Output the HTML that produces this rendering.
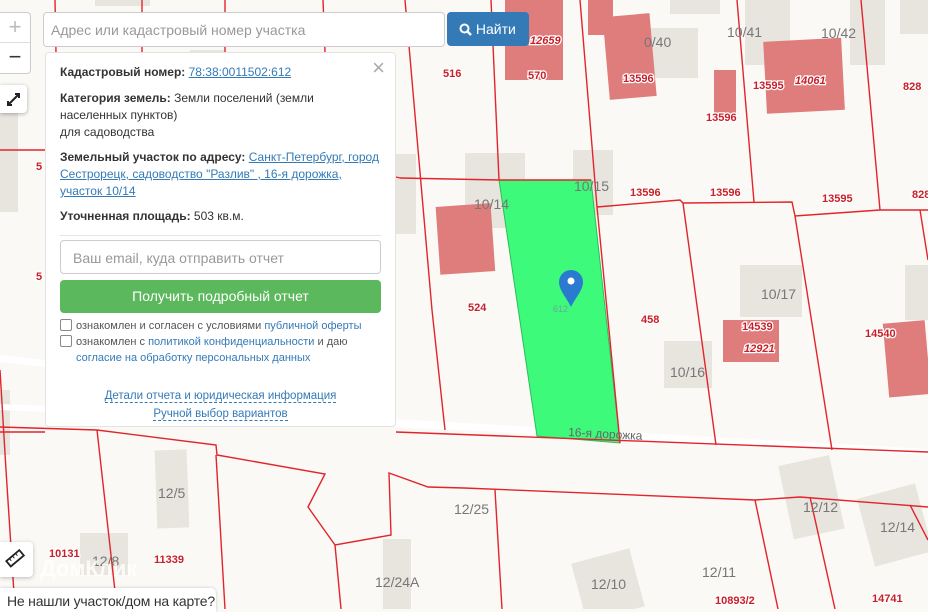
<!DOCTYPE html>
<html><head><meta charset="utf-8"><style>
*{box-sizing:border-box}
body{margin:0;width:928px;height:609px;overflow:hidden;background:#faf9f5;font-family:"Liberation Sans",Arial,sans-serif;position:relative}
svg.map{position:absolute;left:0;top:0}
.ab{position:absolute}
.panel{left:45px;top:52px;width:351px;height:375px;background:#fff;border:1px solid #e3e3e3;border-radius:4px;font-size:12px;color:#333;padding:0 14px}
.panel p{margin:0;position:absolute;left:14px;right:14px;line-height:17px}
.panel b{color:#333}
a{color:#337ab7}
.lk{color:#337ab7;text-decoration:none}
</style></head><body>
<svg class="map" width="928" height="609" viewBox="0 0 928 609">
<g fill="#e8e5df">
<rect x="95" y="0" width="55" height="6"/><rect x="190" y="50" width="35" height="5"/>
<rect x="0" y="100" width="18" height="112"/>
<rect x="396" y="154" width="20" height="80"/>
<rect x="465" y="153" width="60" height="75"/><rect x="573" y="150" width="40" height="65"/>
<rect x="630" y="28" width="68" height="50"/><rect x="670" y="0" width="50" height="14"/>
<rect x="745" y="0" width="45" height="65"/><rect x="850" y="0" width="35" height="65"/>
<rect x="900" y="0" width="28" height="34"/>
<rect x="740" y="265" width="62" height="52"/><rect x="905" y="265" width="23" height="55"/>
<rect x="664" y="341" width="48" height="47"/><rect x="0" y="390" width="10" height="65"/>
<rect x="156" y="450" width="32" height="78" transform="rotate(-2 170 490)"/>
<rect x="80" y="533" width="48" height="42"/><rect x="383" y="539" width="28" height="70"/>
<rect x="785" y="460" width="52" height="75" transform="rotate(-12 810 495)"/>
<rect x="865" y="490" width="60" height="70" transform="rotate(-15 895 525)"/>
<rect x="578" y="555" width="60" height="60" transform="rotate(-15 608 585)"/>
</g>
<g fill="#df7d7d">
<rect x="505" y="0" width="58" height="80"/><rect x="588" y="0" width="25" height="35"/>
<rect x="606" y="15" width="47" height="83" transform="rotate(-5 630 55)"/>
<rect x="714" y="70" width="22" height="48"/>
<rect x="765" y="40" width="78" height="72" transform="rotate(-3 800 75)"/>
<rect x="438" y="205" width="55" height="68" transform="rotate(-4 465 240)"/>
<rect x="723" y="320" width="56" height="42"/>
<rect x="886" y="322" width="42" height="74" transform="rotate(-5 905 360)"/>
</g>
<path d="M411 420 L928 449 L928 455 L460 430 L0 410 L0 404Z" fill="#fff"/>
<path d="M0 355 L45 360 L45 367 L0 362Z" fill="#fff"/>
<polygon points="499,180 591,180 620,443 537,436" fill="#3dfa7a" stroke="#2dbd5a" stroke-width="1"/>
<g fill="none" stroke="#e2242c" stroke-width="1.4">
<path d="M55 0 L58 160"/><path d="M142 0 L142 52"/><path d="M225 0 L225 52"/><path d="M323 0 L325 52"/>
<path d="M405 0 L432 310 L445 430"/><path d="M491 0 L499 180"/><path d="M580 0 L597 207 L620 443"/>
<path d="M737 0 L754 202"/><path d="M861 0 L880 210"/>
<path d="M400 178 L499 180 L591 180"/><path d="M597 207 L680 200 L683 203 L792 202 L795 216 L880 210 L928 210"/>
<path d="M683 203 L716 445"/><path d="M795 216 L832 450"/><path d="M920 210 L928 260"/>
<path d="M0 150 L45 150"/><path d="M396 177 L400 178"/>
<path d="M0 427 L97 430 L216 445 L217 455 L325 474 L308 507 L335 545 L391 535 L389 473 L428 487 L464 488 L755 500 L800 497 L928 507"/>
<path d="M0 432 L45 432"/><path d="M396 432 L928 452"/>
<path d="M0 370 L6 470 L15 609"/><path d="M97 430 L117 609"/><path d="M216 455 L225 609"/>
<path d="M335 545 L341 609"/><path d="M495 490 L502 609"/><path d="M755 500 L778 609"/><path d="M810 497 L835 609"/>
<path d="M910 505 L928 540"/>
</g>
<g font-family="Liberation Sans,Arial,sans-serif" font-size="11" fill="#c8202a" stroke="#fff" stroke-width="2.5" paint-order="stroke" font-weight="bold">
<text x="443" y="77">516</text><text x="528" y="79">570</text><text x="530" y="44" font-style="italic">12659</text>
<text x="623" y="82">13596</text><text x="706" y="121">13596</text><text x="753" y="89">13595</text>
<text x="795" y="84" font-style="italic">14061</text><text x="903" y="90">828</text>
<text x="630" y="196">13596</text><text x="710" y="196">13596</text><text x="822" y="202">13595</text><text x="912" y="198">828</text>
<text x="468" y="311">524</text><text x="641" y="323">458</text>
<text x="742" y="330">14539</text><text x="744" y="352" font-style="italic">12921</text>
<text x="865" y="337">14540</text><text x="49" y="557" >10131</text><text x="154" y="563">11339</text>
<text x="715" y="604">10893/2</text><text x="872" y="602">14741</text>
<text x="36" y="170">5</text><text x="36" y="280">5</text>
</g>
<g font-family="Liberation Sans,Arial,sans-serif" font-size="14" fill="#777">
<text x="644" y="47">0/40</text><text x="727" y="37">10/41</text><text x="821" y="38">10/42</text>
<text x="474" y="209">10/14</text><text x="574" y="191">10/15</text><text x="761" y="299">10/17</text>
<text x="670" y="377">10/16</text><text x="158" y="498">12/5</text><text x="92" y="566">12/8</text>
<text x="454" y="514">12/25</text><text x="803" y="512">12/12</text><text x="880" y="532">12/14</text>
<text x="591" y="589">12/10</text><text x="702" y="577">12/11</text><text x="375" y="587">12/24А</text>
</g>
<text x="568" y="436" font-family="Liberation Sans,Arial,sans-serif" font-size="12" fill="#666" transform="rotate(3 568 436)">16-я дорожка</text>
<text x="553" y="312" font-family="Liberation Sans,Arial,sans-serif" font-size="9" fill="#6a9">612</text>
<text x="40" y="576" font-family="Liberation Sans,Arial,sans-serif" font-size="22" fill="#fff" fill-opacity=".8" font-weight="bold">ДомКлик</text>
<path d="M571 307 C566 297 559 290 559 282 A12 12 0 0 1 583 282 C583 290 576 297 571 307Z" fill="#2a7bd0"/>
<circle cx="571" cy="281" r="3.5" fill="#fff"/>
</svg>

<div class="ab" style="left:0;top:12px;width:31px;height:62px;background:#fff;border:1px solid #ccc;border-left:none;border-radius:0 4px 4px 0">
<div style="height:30px;border-bottom:1px solid #ddd;text-align:center;font-size:22px;line-height:28px;color:#bbb">+</div>
<div style="text-align:center;font-size:22px;line-height:28px;color:#333">−</div></div>
<div class="ab" style="left:0;top:85px;width:27px;height:28px;background:#fff;border-radius:0 4px 4px 0;box-shadow:0 1px 4px rgba(0,0,0,.3)">
<svg width="27" height="28"><path d="M8 20 L19 9 M15 9 L19 9 L19 13 M8 16 L8 20 L12 20" stroke="#222" stroke-width="2" fill="none"/></svg></div>
<div class="ab" style="left:43px;top:12px;width:402px;height:35px;background:#fff;border:1px solid #ccc;border-radius:4px;font-size:14px;color:#999;padding:9px 7px">Адрес или кадастровый номер участка</div>
<div class="ab" style="left:447px;top:12px;width:82px;height:34px;background:#337ab7;border-radius:4px;color:#fff;font-size:14px;padding:9px 0 0 12px"><svg width="13" height="13" style="vertical-align:-2px"><circle cx="5.5" cy="5.5" r="4" stroke="#fff" stroke-width="2" fill="none"/><path d="M8.5 8.5 L12 12" stroke="#fff" stroke-width="2.5"/></svg> Найти</div>

<div class="ab panel">
<div class="ab" style="right:10px;top:2px;font-size:22px;color:#aaa">×</div>
<p style="top:11px"><b>Кадастровый номер:</b> <a href="#">78:38:0011502:612</a></p>
<p style="top:37px"><b>Категория земель:</b> Земли поселений (земли населенных пунктов)<br>для садоводства</p>
<p style="top:96px"><b>Земельный участок по адресу:</b> <a href="#">Санкт-Петербург, город Сестрорецк, садоводство "Разлив" , 16-я дорожка, участок 10/14</a></p>
<p style="top:155px"><b>Уточненная площадь:</b> 503 кв.м.</p>
<div class="ab" style="left:14px;right:14px;top:182px;border-top:1px solid #e5e5e5"></div>
<div class="ab" style="left:14px;right:14px;top:187px;height:34px;border:1px solid #ccc;border-radius:4px;font-size:14px;color:#999;padding:9px 12px">Ваш email, куда отправить отчет</div>
<div class="ab" style="left:14px;right:14px;top:227px;height:33px;background:#5cb85c;border-radius:4px;font-size:14px;color:#fff;text-align:center;line-height:33px">Получить подробный отчет</div>
<div class="ab" style="left:14px;top:265px;font-size:11px;line-height:16px;color:#555;width:320px">
<div><span style="display:inline-block;width:12px;height:12px;border:1px solid #888;border-radius:2px;vertical-align:-2px;margin-right:4px"></span>ознакомлен и согласен с условиями <span class="lk">публичной оферты</span></div>
<div style="padding-left:16px;text-indent:-16px"><span style="display:inline-block;width:12px;height:12px;border:1px solid #888;border-radius:2px;vertical-align:-2px;margin-right:4px"></span>ознакомлен с <span class="lk">политикой конфиденциальности</span> и даю <span class="lk">согласие на обработку персональных данных</span></div>
</div>
<div class="ab" style="left:0;right:0;top:334px;text-align:center;font-size:11.5px;line-height:18px"><span class="lk" style="border-bottom:1px dashed #337ab7">Детали отчета и юридическая информация</span><br><span class="lk" style="border-bottom:1px dashed #337ab7">Ручной выбор вариантов</span></div>
</div>

<div class="ab" style="left:0;top:542px;width:33px;height:35px;background:#fff;border-radius:0 4px 4px 0;box-shadow:0 1px 4px rgba(0,0,0,.25)">
<svg width="33" height="35"><g transform="rotate(-40 15 17)"><rect x="7" y="13" width="17" height="7" stroke="#222" stroke-width="1.8" fill="none"/><path d="M11 13v3M15 13v3M19 13v3" stroke="#222"/></g></svg></div>
<div class="ab" style="left:0;top:588px;width:216px;height:24px;background:#fff;border-radius:0 5px 0 0;box-shadow:0 0 3px rgba(0,0,0,.2);font-size:14px;color:#333;padding:5px 0 0 7px;white-space:nowrap;letter-spacing:-0.2px">Не нашли участок/дом на карте?</div>
</body></html>
